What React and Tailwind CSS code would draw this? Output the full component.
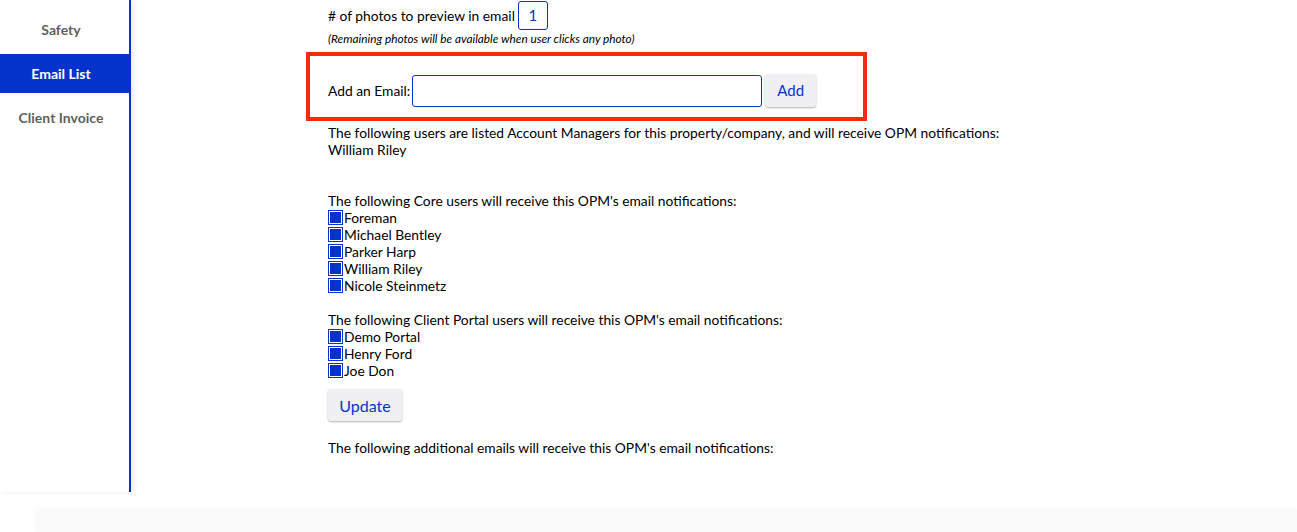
import React from 'react';

const coreUsers = ['Foreman', 'Michael Bentley', 'Parker Harp', 'William Riley', 'Nicole Steinmetz'];
const portalUsers = ['Demo Portal', 'Henry Ford', 'Joe Don'];

function Check({ label }) {
    return (
        <div className="flex items-center h-[17px]">
            <span className="inline-flex w-[15px] h-[15px] border border-[#0433cc] p-[1px] mr-[1px] bg-white">
                <span className="w-full h-full bg-[#0433cc]"></span>
            </span>
            <span>{label}</span>
        </div>
    );
}

export default function App() {
    const navItems = ['Safety', 'Email List', 'Client Invoice'];

    return (
        <div className="h-[532px] overflow-hidden bg-white flex flex-col font-['Lato','Liberation_Sans',sans-serif] text-black">
            <div className="flex h-[492px] shrink-0">
                {/* sidebar */}
                <div className="w-[131px] shrink-0 border-r-[2px] border-[#0433cc] shadow-[3px_0_5px_rgba(0,0,0,0.07)] pt-[10px] flex flex-col gap-[5px]">
                    {navItems.map((item) => (
                        <div
                            key={item}
                            className={`h-[39px] pr-[7px] flex items-center justify-center text-[14px] font-bold ${item === 'Email List' ? 'bg-[#0433cc] text-white' : 'text-[#5f5f5f]'}`}
                        >
                            {item}
                        </div>
                    ))}
                </div>

                {/* main content */}
                <div className="pl-[197px] text-[13.8px] leading-[17px]">
                    <div className="flex items-center h-[29px] pt-[1px]">
                        <span># of photos to preview in email</span>
                        <span className="ml-[3px] w-[30px] h-[29px] border border-[#0433cc] rounded-[3px] flex items-center justify-center text-[15px] text-[#0433cc]">1</span>
                    </div>
                    <p className="italic text-[11.8px] mt-[3px] leading-[14px]">(Remaining photos will be available when user clicks any photo)</p>

                    <div className="-ml-[22px] mt-[6px] w-[561px] h-[69px] border-4 border-[#f72a10] pt-[18px] pl-[18px]">
                        <div className="flex items-center">
                            <span>Add an Email:</span>
                            <input type="text" className="ml-[2px] w-[350px] h-[32px] border border-[#0433cc] rounded-[3px] outline-none" />
                            <button className="ml-[3px] w-[51px] h-[33px] bg-[#f0f0f3] rounded-[3px] shadow-[0_1px_2px_rgba(0,0,0,0.3)] text-[15px] text-[#0433cc]">Add</button>
                        </div>
                    </div>

                    <p className="mt-[3px]">The following users are listed Account Managers for this property/company, and will receive OPM notifications:</p>
                    <p>William Riley</p>
                    <br />
                    <br />
                    <p>The following Core users will receive this OPM's email notifications:</p>
                    {coreUsers.map((u) => <Check key={u} label={u} />)}
                    <br />
                    <p>The following Client Portal users will receive this OPM's email notifications:</p>
                    {portalUsers.map((u) => <Check key={u} label={u} />)}

                    <button className="mt-[10px] w-[74px] h-[32px] bg-[#f0f0f3] rounded-[3px] shadow-[0_1px_2px_rgba(0,0,0,0.3)] text-[16px] text-[#0433cc] block">Update</button>

                    <p className="mt-[18px]">The following additional emails will receive this OPM's email notifications:</p>
                </div>
            </div>

            <div className="mt-[18px] ml-[35px] h-[30px] bg-[#fafafa] shadow-[0_-2px_6px_rgba(0,0,0,0.03)]"></div>
        </div>
    );
}
